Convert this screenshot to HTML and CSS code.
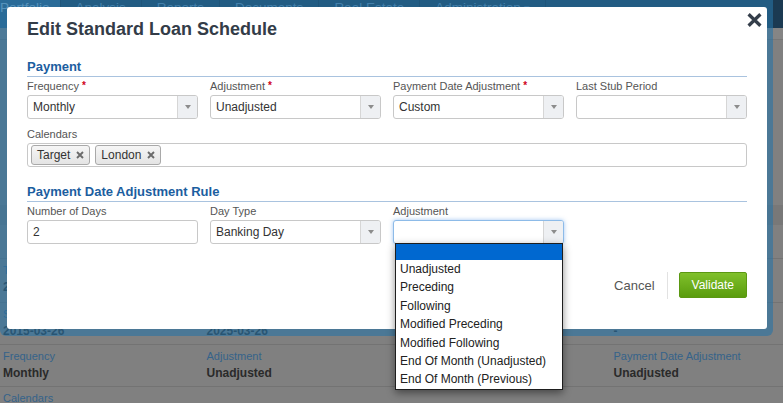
FILE: index.html
```html
<!DOCTYPE html>
<html lang="en">
<head>
<meta charset="utf-8">
<title>Edit Standard Loan Schedule</title>
<link rel="stylesheet" href="styles.css">
</head>
<body>
<div class="page">
  <nav class="topnav">
    <span class="tab tab-first active">Portfolio</span>
    <span class="tab">Analysis</span>
    <span class="tab">Reports</span>
    <span class="tab">Documents</span>
    <span class="tab">Real Estate</span>
    <span class="tab">Administration <span class="caret">&#9662;</span></span>
  </nav>
  <div class="subbar"></div>
  <div class="band"></div>
  <div class="details">
    <div class="drow drow-first">
      <div><div class="dl">T</div><div class="dv">2</div></div>
    </div>
    <div class="drow">
      <div><div class="dl">S</div><div class="dv">2015-03-26</div></div>
      <div><div class="dl"></div><div class="dv">2025-03-26</div></div>
      <div></div>
      <div><div class="dl"></div><div class="dv">-</div></div>
    </div>
    <div class="drow">
      <div><div class="dl">Frequency</div><div class="dv">Monthly</div></div>
      <div><div class="dl">Adjustment</div><div class="dv">Unadjusted</div></div>
      <div></div>
      <div><div class="dl">Payment Date Adjustment</div><div class="dv">Unadjusted</div></div>
    </div>
    <div class="drow">
      <div><div class="dl">Calendars</div></div>
    </div>
  </div>
</div>

<div class="frame">
  <div class="modal">
    <header class="modal-head">
      <h1 class="modal-title">Edit Standard Loan Schedule</h1>
      <span class="close">
        <svg width="15" height="14" viewBox="0 0 15 14"><path d="M1.6 1.3L13.4 12.7M13.4 1.3L1.6 12.7" stroke="#343e4a" stroke-width="3.3" fill="none"/></svg>
      </span>
    </header>

    <section class="section">
      <h2 class="sec-title">Payment</h2>
      <div class="grid">
        <div class="field">
          <div class="label">Frequency <span class="req">*</span></div>
          <div class="select"><span class="val">Monthly</span><span class="arrow"><i class="tri"></i></span></div>
        </div>
        <div class="field">
          <div class="label">Adjustment <span class="req">*</span></div>
          <div class="select"><span class="val">Unadjusted</span><span class="arrow"><i class="tri"></i></span></div>
        </div>
        <div class="field">
          <div class="label">Payment Date Adjustment <span class="req">*</span></div>
          <div class="select"><span class="val">Custom</span><span class="arrow"><i class="tri"></i></span></div>
        </div>
        <div class="field">
          <div class="label">Last Stub Period</div>
          <div class="select"><span class="val"></span><span class="arrow"><i class="tri"></i></span></div>
        </div>
      </div>
      <div class="field field-wide">
        <div class="label">Calendars</div>
        <div class="multi">
          <span class="tagitem">Target <svg class="x" width="8" height="8" viewBox="0 0 8 8"><path d="M1 1L7 7M7 1L1 7" stroke="#6b6b6b" stroke-width="1.9" fill="none"/></svg></span>
          <span class="tagitem">London <svg class="x" width="8" height="8" viewBox="0 0 8 8"><path d="M1 1L7 7M7 1L1 7" stroke="#6b6b6b" stroke-width="1.9" fill="none"/></svg></span>
        </div>
      </div>
    </section>

    <section class="section section-2">
      <h2 class="sec-title">Payment Date Adjustment Rule</h2>
      <div class="grid">
        <div class="field">
          <div class="label">Number of Days</div>
          <div class="input"><span class="val">2</span></div>
        </div>
        <div class="field">
          <div class="label">Day Type</div>
          <div class="select"><span class="val">Banking Day</span><span class="arrow"><i class="tri"></i></span></div>
        </div>
        <div class="field">
          <div class="label">Adjustment</div>
          <div class="select focused"><span class="val"></span><span class="arrow"><i class="tri"></i></span>
            <ul class="listbox">
              <li class="opt selected"></li>
              <li class="opt">Unadjusted</li>
              <li class="opt">Preceding</li>
              <li class="opt">Following</li>
              <li class="opt">Modified Preceding</li>
              <li class="opt">Modified Following</li>
              <li class="opt">End Of Month (Unadjusted)</li>
              <li class="opt">End Of Month (Previous)</li>
            </ul>
          </div>
        </div>
        <div class="field"></div>
      </div>
    </section>

    <footer class="modal-foot">
      <span class="cancel">Cancel</span>
      <span class="vsep"></span>
      <span class="btn">Validate</span>
    </footer>
  </div>
</div>
</body>
</html>
```

FILE: styles.css
```css
* { box-sizing: border-box; margin: 0; padding: 0; }
html, body { width: 783px; height: 403px; overflow: hidden; }
body {
  font-family: "Liberation Sans", Arial, Helvetica, sans-serif;
  background: #808080;
  position: relative;
}

/* background page (already dimmed) */
.topnav { display: flex; height: 28px; background: #1b3a52; }
.tab {
  font-size: 13.5px; line-height: 16px; height: 28px;
  color: #6d95b4; padding: 0 15px;
  border-right: 1px solid #12293a;
  white-space: nowrap;
}
.tab-first { margin-left: -6px; padding: 0 10px 0 6px; }
.tab.active { background: #2d5f86; color: #9cc2de; }
.caret { font-size: 11px; }
.subbar { height: 12px; background: #858585; border-bottom: 1px solid #777; }
.band { margin-top: 165px; height: 20px; background: #787878; }
.details { margin-top: 33px; }
.drow {
  display: grid;
  grid-template-columns: 203.5px 203.5px 203.5px 1fr;
  border-top: 1px solid #737373;
  padding: 4px 3px 5px;
}
.drow-first { padding-bottom: 7px; }
.dl { font-size: 11px; line-height: 14px; height: 14px; color: #35638a; white-space: nowrap; }
.dv { font-size: 12px; line-height: 16px; margin-top: 2px; font-weight: bold; color: #2a2a2a; white-space: nowrap; }

/* modal */
.frame {
  position: absolute; left: 0; top: 0;
  width: 773px; height: 336px;
  padding: 7px 6px 7px 7px;
  background: rgba(40, 115, 165, 0.6);
  border-radius: 0 0 6px 6px;
}
.modal {
  background: #fff; height: 100%;
  border-radius: 3px;
  padding: 11px 20px 0 20px;
}
.modal-head { display: flex; justify-content: space-between; align-items: flex-start; }
.modal-title { font-size: 18px; line-height: 22px; font-weight: bold; color: #333c48; }
.close { display: block; width: 15px; height: 14px; margin-top: -5.3px; margin-right: -15px; }
.close svg { display: block; }

.section { margin-top: 18.5px; }
.section-2 { margin-top: 16.5px; }
.sec-title {
  font-size: 13px; line-height: 16px; font-weight: bold; color: #1b5e9f;
  padding-bottom: 1.5px; border-bottom: 1px solid #a9c3df; margin-bottom: 2px;
}
.grid { display: grid; grid-template-columns: repeat(4, 1fr); column-gap: 12px; }
.field { position: relative; }
.field-wide { margin-top: 8px; }
.label { font-size: 11px; line-height: 14px; color: #555; margin-bottom: 2px; white-space: nowrap; }
.req { color: #d0021b; font-weight: bold; font-size: 10px; vertical-align: 1px; }

.select, .input {
  position: relative;
  display: flex; height: 24px;
  border: 1px solid #c8c8c8; border-radius: 3px; background: #fff;
}
.val { flex: 1; padding-left: 5px; font-size: 12px; line-height: 22px; color: #333; white-space: nowrap; }
.arrow {
  width: 20px; background: #eef0f3; border-left: 1px solid #d6d6d6;
  border-radius: 0 2px 2px 0;
  display: flex; align-items: center; justify-content: center;
}
.tri { display: block; width: 0; height: 0; border-left: 3.5px solid transparent; border-right: 3.5px solid transparent; border-top: 4px solid #8c8c8c; }
.focused { border-color: #8dbbe8; box-shadow: 0 0 4px rgba(82, 150, 230, 0.55); }

.multi {
  display: flex; align-items: center; gap: 5px;
  height: 24px; padding: 0 3px;
  border: 1px solid #c8c8c8; border-radius: 3px;
}
.tagitem {
  display: inline-flex; align-items: center; gap: 6px;
  height: 19.5px; padding: 0 5px 0 5px;
  border: 1px solid #a9a9a9; border-radius: 3px;
  background: linear-gradient(#f6f6f6, #e4e4e4);
  font-size: 12px; color: #333;
}
.x { display: block; }

.listbox {
  position: absolute; top: 100%; left: 1px; right: 0;
  list-style: none; background: #fff;
  border: 1px solid #1e1e1e;
  box-shadow: 0 3px 8px rgba(0, 0, 0, 0.45);
  z-index: 5;
}
.opt { font-size: 12px; line-height: 18.4px; height: 18.4px; padding-left: 4px; color: #222; white-space: nowrap; }
.opt.selected { height: 16px; background: #0068d0; }

.modal-foot { margin-top: 27.7px; display: flex; justify-content: flex-end; align-items: center; }
.cancel { font-size: 13px; color: #555; margin-right: 12px; }
.vsep { width: 1px; height: 27px; background: #e2e2e2; margin-right: 11px; }
.btn {
  height: 26px; padding: 0 12px;
  font-size: 12px; line-height: 24px; color: #fff;
  background: linear-gradient(#80c02b, #5a9c0e);
  border: 1px solid #5b9812; border-radius: 2px;
}
```
